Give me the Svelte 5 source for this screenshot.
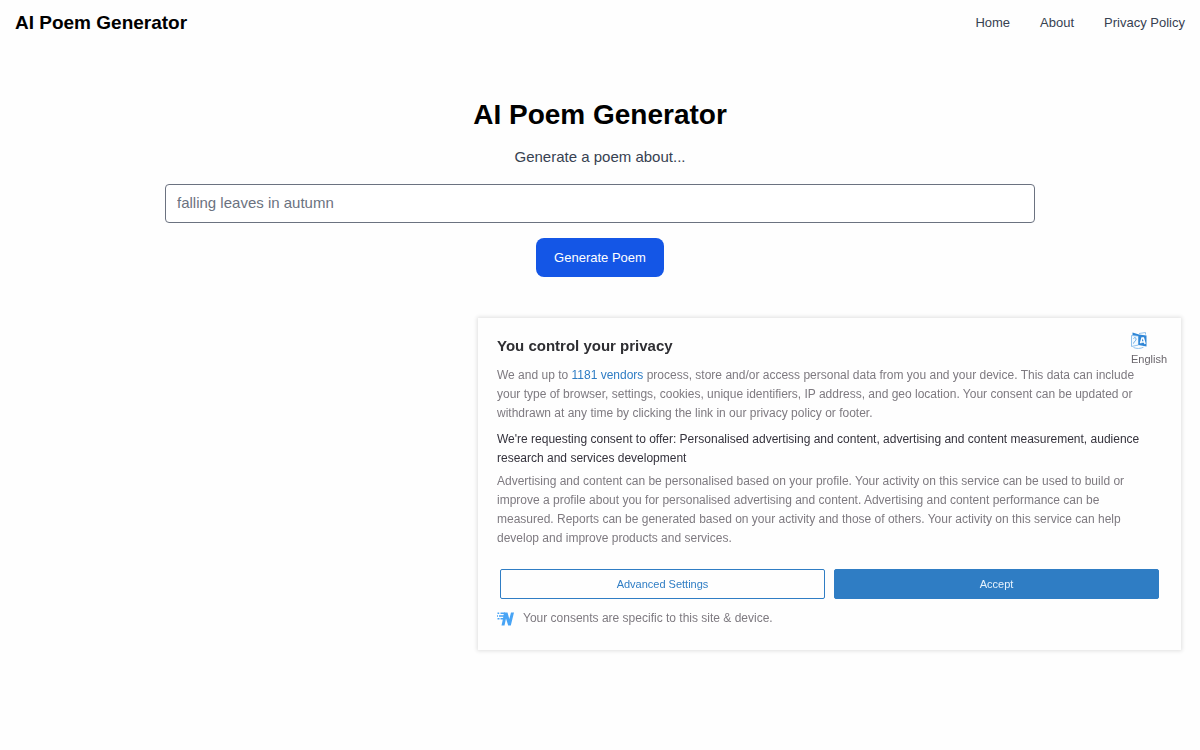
<script>
  const links = ['Home', 'About', 'Privacy Policy'];

  let topic = $state('');
  let showConsent = $state(true);
</script>

<header class="navbar">
  <a class="brand" href="#home">AI Poem Generator</a>
  <nav class="nav-links">
    {#each links as link}
      <a href="#{link.toLowerCase().replace(' ', '-')}">{link}</a>
    {/each}
  </nav>
</header>

<main>
  <h1>AI Poem Generator</h1>
  <form onsubmit={(e) => e.preventDefault()}>
    <label for="topic">Generate a poem about...</label>
    <input id="topic" type="text" placeholder="falling leaves in autumn" bind:value={topic} />
    <button class="generate" type="submit">Generate Poem</button>
  </form>
</main>

{#if showConsent}
  <section class="consent" role="dialog" aria-labelledby="consent-title">
    <button class="language" type="button">
      <svg width="16" height="17" viewBox="0 0 16 17" aria-hidden="true">
        <path d="M.5 3.500 7.500 4v9L.5 14.500z" fill="#f4faff" stroke="#8fc1ec" />
        <path d="M2.500 6.500c1-1.500 3-.8 2.500 1S3 9.500 2.500 11.500" fill="none" stroke="#5ba5e4" />
        <path d="M1.500 .5 8 2.500 15.500 3.500v11L7.500 13V4L1.500 3z" fill="#2f86d6" />
        <path d="m9.500 11.300 1.500-5.300h1.400l1.700 6M10.300 9.700l3 .4" fill="none" stroke="#fff" stroke-width="1.500" />
        <path d="M8 1.500l6.500-1v2M2.500 15.500c3 1.300 7 1.300 10-.3" fill="none" stroke="#8fc1ec" />
      </svg>
      <span>English</span>
    </button>

    <h2 id="consent-title">You control your privacy</h2>
    <p>
      We and up to <a href="#vendors">1181 vendors</a> process, store and/or access personal data
      from you and your device. This data can include your type of browser, settings, cookies,
      unique identifiers, IP address, and geo location. Your consent can be updated or withdrawn at
      any time by clicking the link in our privacy policy or footer.
    </p>
    <p class="request">
      We're requesting consent to offer: Personalised advertising and content, advertising and
      content measurement, audience research and services development
    </p>
    <p>
      Advertising and content can be personalised based on your profile. Your activity on this
      service can be used to build or improve a profile about you for personalised advertising and
      content. Advertising and content performance can be measured. Reports can be generated based
      on your activity and those of others. Your activity on this service can help develop and
      improve products and services.
    </p>

    <div class="actions">
      <button class="advanced" type="button">Advanced Settings</button>
      <button class="accept" type="button" onclick={() => (showConsent = false)}>Accept</button>
    </div>

    <div class="footnote">
      <svg width="17" height="14" viewBox="0 0 17 14" aria-hidden="true">
        <path d="M7 .5h3.500L12.300 7 14 .5h3L13.800 13.500h-2.600L9 6.500 7.500 13.500H4.500L5.500 9z" fill="#48a4f5" />
        <path d="M3.500 1.200H8M.5 1.200H2.200M2 4H8M3.500 6.700H8M0 4h1M.5 6.700H2.500" stroke="#48a4f5" stroke-width="1.600" />
      </svg>
      <span>Your consents are specific to this site &amp; device.</span>
    </div>
  </section>
{/if}

<style>
  :global(body) {
    background: #fefefe;
    font-family: 'Liberation Sans', Arial, sans-serif;
  }

  a {
    text-decoration: none;
  }

  button,
  input {
    box-sizing: border-box;
    font-family: inherit;
  }

  .navbar {
    display: flex;
    align-items: center;
    justify-content: space-between;
    padding: 8px 15px;
  }

  .brand {
    color: #000;
    font-size: 19px;
    font-weight: 700;
    line-height: 30px;
  }

  .nav-links {
    display: flex;
    gap: 30px;
  }

  .nav-links a {
    color: #374151;
    font-size: 13px;
    line-height: 20px;
  }

  main {
    max-width: 870px;
    margin: 0 auto;
    padding: 51px 15px;
  }

  h1 {
    margin: 0 0 14px;
    color: #000;
    font-size: 28px;
    line-height: 36px;
    text-align: center;
  }

  form {
    display: flex;
    flex-direction: column;
    align-items: center;
    gap: 15px;
  }

  label {
    margin-bottom: 2px;
    color: #374151;
    font-size: 15px;
    line-height: 20px;
  }

  input {
    width: 100%;
    height: 39px;
    padding: 0 11px 2px;
    border: 1px solid #6b7280;
    border-radius: 4px;
    background: #fff;
    color: #111827;
    font-size: 15px;
  }

  input::placeholder {
    color: #6b7280;
    opacity: 1;
  }

  .generate {
    height: 39px;
    padding: 0 18px;
    border: 0;
    border-radius: 8px;
    background: #1456e6;
    color: #fff;
    font-size: 13px;
    cursor: pointer;
  }

  .consent {
    position: fixed;
    right: 19px;
    bottom: 100px;
    box-sizing: border-box;
    width: min(703px, 100% - 38px);
    padding: 18px 19px 22px;
    background: #fefefe;
    box-shadow: 0 0 4px 1px rgba(0, 0, 0, 0.12);
    color: #7e7a80;
    font-size: 12px;
    line-height: 19px;
  }

  /* sits in the corner, over the heading row */
  .language {
    position: absolute;
    top: 14px;
    right: 14px;
    display: flex;
    flex-direction: column;
    align-items: flex-start;
    gap: 2px;
    padding: 0;
    border: 0;
    background: none;
    color: #6a666c;
    font-size: 11px;
    line-height: 16px;
    cursor: pointer;
  }

  h2 {
    margin: 0 0 10px;
    color: #2f2f33;
    font-size: 15px;
    line-height: 20px;
  }

  p {
    margin: 0 14px 7px 0;
  }

  p a {
    color: #2f7dc4;
  }

  .request {
    margin-bottom: 4px;
    color: #34323c;
  }

  .actions {
    display: flex;
    gap: 9px;
    margin: 21px 3px 10px;
  }

  .actions button {
    flex: 1;
    height: 30px;
    padding: 0;
    border: 1px solid #2f7dc4;
    border-radius: 2px;
    font-size: 11px;
    cursor: pointer;
  }

  .advanced {
    background: #fefefe;
    color: #2f7dc4;
  }

  .accept {
    background: #2f7dc4;
    color: #e8f3fd;
  }

  .footnote {
    display: flex;
    align-items: center;
    gap: 9px;
  }
</style>
